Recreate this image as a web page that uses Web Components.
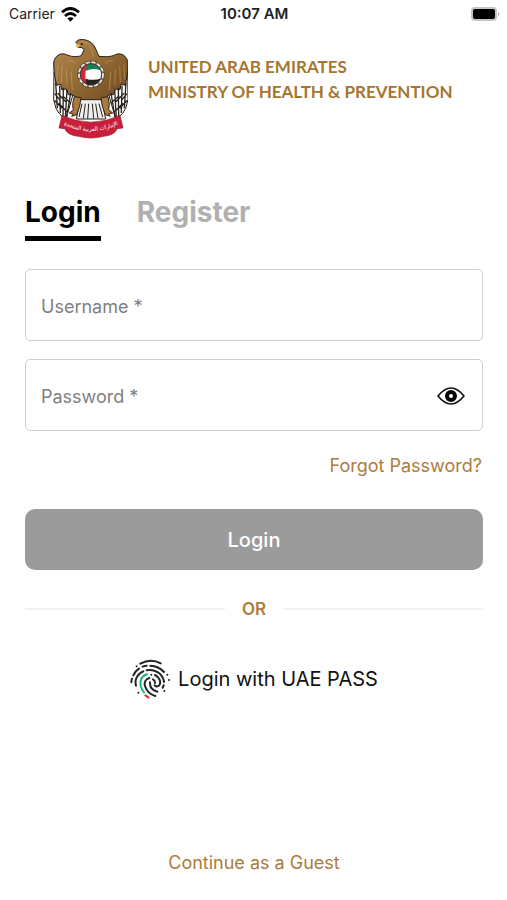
<!DOCTYPE html>
<html lang="en">
<head>
<meta charset="utf-8">
<meta name="viewport" content="width=device-width, initial-scale=1">
<title>Login</title>
<style>
  body { margin: 0; background: #fff; color: #000; font-family: Inter, "Liberation Sans", sans-serif; --gold: #ac7c3c; }
</style>
</head>
<body>
<login-page></login-page>
<script>
const define = (name, html, setup) => {
  const template = document.createElement('template');
  template.innerHTML = html;
  customElements.define(name, class extends HTMLElement {
    constructor() {
      super();
      this.attachShadow({ mode: 'open' }).append(template.content.cloneNode(true));
    }
    connectedCallback() { if (setup) setup(this, this.shadowRoot); }
  });
};

define('status-bar', `
<style>
  :host { display: grid; grid-template-columns: 1fr auto 1fr; align-items: center; height: 28px; padding: 0 7px 0 9px; font-size: 14px; line-height: 20px; color: #222; }
  .left { display: flex; align-items: center; gap: 6px; }
  .time { font-size: 15px; font-weight: 600; }
  .battery { justify-self: end; }
  svg { display: block; }
</style>
<div class="left"><span>Carrier</span>
  <svg width="19" height="15" viewBox="0 0 57 45" fill="none" stroke="#000" stroke-width="8" aria-hidden="true">
    <path d="M3 16Q28 -7 54 16M12 27Q28 12 45 27"/><path d="M19 34Q28 27 38 34L28 44Z" fill="#000" stroke="none"/>
  </svg></div>
<span class="time">10:07 AM</span>
<svg class="battery" width="30" height="16" viewBox="0 0 30 16" aria-hidden="true">
  <rect x="1" y="1" width="26" height="14" rx="4" fill="#c4c4c4"/><rect x="3" y="3" width="22" height="10" rx="2" fill="#000"/><path d="M28 6Q31 8 28 10Z" fill="#aaa"/>
</svg>`);

define('state-emblem', `
<style>:host { display: block; } svg { display: block; }</style>
<svg width="76" height="100" viewBox="20 14 228 300" role="img" aria-label="Emblem of the United Arab Emirates">
  <defs>
    <linearGradient id="brown" x1="0" x2="1" y2="1"><stop offset="0" stop-color="#b58b4f"/><stop offset=".5" stop-color="#926a34"/><stop offset="1" stop-color="#70481f"/></linearGradient>
    <clipPath id="disc"><circle cx="137" cy="120" r="32"/></clipPath>
    <path id="motto" d="M40 263Q137 317 234 263"/>
  </defs>
  <g stroke="#241c18" stroke-width="3" stroke-linejoin="round">
    <path d="M26 112L76 145L86 170L62 253L51 246L41 237L32 222L25 196Z" fill="#fff"/>
    <path d="M247 112L197 145L187 170L211 253L222 246L232 237L241 222L248 196Z" fill="#fff"/>
    <path d="M97 18C110 12 132 17 143 30C153 42 154 54 161 66C178 67 195 69 210 61C228 53 246 66 248 86L247 112L240 153L227 150L224 166L210 164L204 181L190 182L174 200L99 200L83 182L69 181L63 164L49 166L46 150L33 153L26 112L25 86C27 66 45 53 63 61C76 67 93 69 108 64L117 45L109 40L96 38L97 28L91 25Z" fill="url(#brown)"/>
    <path d="M104 196H170L181 254H93Z" fill="#eee"/>
  </g>
  <g fill="none" stroke="#29231f" stroke-width="4">
    <path d="M31 145L36 222M43 154L45 236M54 160L53 246M65 167L60 250M76 176L64 248M28 178L43 196M27 198L50 222M37 177L61 202M40 207L65 232M51 184L77 207"/>
    <path d="M242 145L237 222M230 154L228 236M219 160L220 246M208 167L213 250M197 176L209 248M245 178L230 196M246 198L223 222M236 177L212 202M233 207L208 232M222 184L196 207"/>
    <path d="M110 208L101 248M120 208L114 252M130 208L127 253M141 208L145 253M151 208L158 252M161 208L172 248" stroke-width="3"/>
  </g>
  <path d="M87 187Q79 211 84 226L72 236L84 239L79 246L94 241L103 216L107 190ZM188 187Q195 211 190 226L202 236L190 239L195 246L180 241L171 216L167 190Z" fill="#a87b3c" stroke="#33231a" stroke-width="3"/>
  <path d="M104 23Q123 20 133 34Q144 50 144 69M69 79Q82 77 91 87M203 79Q190 77 180 87M38 91L34 136M50 96L48 144M63 103L65 153M77 112L81 166M235 91L239 136M223 96L225 144M210 103L208 153M196 112L192 166" fill="none" stroke="#d0ac74" stroke-width="3" opacity=".5"/>
  <circle cx="109" cy="29" r="3" fill="#1d1712"/>
  <path d="M92 26L105 31L98 41L93 38Z" fill="#e3b452"/>
  <circle cx="137" cy="120" r="40" fill="#6f665c" stroke="#40352b" stroke-width="2"/>
  <circle cx="137" cy="120" r="36" fill="none" stroke="#e7e0d4" stroke-width="6" stroke-dasharray="12 5"/>
  <g clip-path="url(#disc)"><path fill="#fff" d="M104 87h66v66h-66z"/><path fill="#168153" d="M104 87h66v22Q145 99 122 109h-18z"/><path fill="#252326" d="M122 133Q146 141 170 131v26h-66z"/><path fill="#db2637" d="M104 87h22Q115 118 124 153h-20z"/></g>
  <circle cx="137" cy="120" r="32" fill="none" stroke="#3c332c" stroke-width="3"/>
  <path d="M50 243Q137 284 224 243L233 281L216 283Q207 303 175 306Q137 316 99 306Q67 303 58 283L41 281Z" fill="#c91f3b" stroke="#921b2c" stroke-width="2"/>
  <text font-family="DejaVu Sans, sans-serif" font-size="17" fill="#fff" text-anchor="middle"><textPath href="#motto" startOffset="50%">الإمارات العربية المتحدة</textPath></text>
</svg>`);

define('brand-header', `
<style>
  :host { display: flex; align-items: flex-start; gap: 20px; padding: 11px 27px 0 52px; color: #a6762f; }
  h1 { margin: 15px 0 0; font: 700 17px/25px Lato, sans-serif; white-space: nowrap; }
  h1 span { display: block; }
</style>
<state-emblem></state-emblem>
<h1><span>UNITED ARAB EMIRATES</span><span>MINISTRY OF HEALTH &amp; PREVENTION</span></h1>`);

define('auth-tabs', `
<style>
  :host { display: flex; gap: 36px; }
  button { border: 0; border-bottom: 5px solid transparent; background: none; padding: 0 0 7px; font: 700 28px/34px Inter, sans-serif; color: #b0b0b0; }
  button[aria-selected=true] { color: #000; border-color: #000; }
</style>
<button role="tab" aria-selected="true">Login</button><button role="tab" aria-selected="false">Register</button>`, (host) => host.setAttribute('role', 'tablist'));

define('text-field', `
<style>
  :host { display: flex; align-items: center; box-sizing: border-box; height: 72px; border: 1px solid #cfcfcf; border-radius: 5px; padding: 2px 15px 0; }
  input { flex: 1; min-width: 0; border: 0; outline: 0; padding: 2px 0 0; background: none; font: 400 18px/24px Inter, sans-serif; color: #000; }
  input::placeholder { color: #808080; opacity: 1; }
</style>
<input><slot></slot>`, (host, root) => {
  const input = root.querySelector('input');
  input.type = host.getAttribute('type') || 'text';
  input.placeholder = host.getAttribute('label');
  input.setAttribute('aria-label', host.getAttribute('label'));
});

define('reveal-button', `
<style>:host { display: block; } button { display: block; border: 0; padding: 0; background: none; } svg { display: block; }</style>
<button type="button" aria-label="Show password"><svg width="32" height="20" viewBox="0 0 32 20" fill="none" stroke="#111">
  <path d="M3 10Q16 -6 29 10Q16 26 3 10Z" stroke-width="1.6" stroke-linejoin="round"/><circle cx="16" cy="10" r="4" stroke="#000" stroke-width="4"/>
</svg></button>`);

define('or-divider', `
<style>
  :host { display: flex; align-items: center; gap: 17px; font-size: 17px; line-height: 24px; font-weight: 600; color: var(--gold); }
  :host::before, :host::after { content: ""; flex: 1; height: 2px; background: #f1f1f1; }
</style><slot></slot>`);

define('uae-pass-button', `
<style>
  :host { display: flex; justify-content: center; }
  button { display: flex; align-items: center; gap: 8px; border: 0; padding: 0; background: none; color: #111; font: 400 20px/24px Inter, sans-serif; }
</style>
<button type="button">
<svg width="40" height="40" viewBox="26 27 120 120" fill="none" stroke="#222" stroke-width="6" stroke-linecap="round" aria-hidden="true">
  <path d="M57 41Q88 24 118 40M36 76Q42 63 53 56M64 50Q70 47 76 47M87 47Q112 48 128 66M30 97Q30 91 32 86M44 107C39 89 48 71 66 64M76 61C98 56 120 69 126 87Q128 92 128 96M127 106Q126 110 124 113M101 75C115 82 119 95 115 104C111 112 103 110 100 106M84 84C72 88 68 98 71 108C76 124 88 134 102 138M86 97C85 112 93 121 108 125M95 88Q101 91 101 99"/>
  <path d="M77 73C61 77 54 92 58 108Q61 120 68 127" stroke="#1eb581"/>
  <path d="M72 136L81 142" stroke="#e52a2d"/>
  <path d="M46 49h0M138 74h0M143 90h0M51 128h0M90 74h0M129 123h0"/>
</svg><span>Login with UAE PASS</span></button>`);

define('login-page', `
<style>
  :host { display: flex; flex-direction: column; min-height: 100vh; }
  main { flex: 1; display: flex; flex-direction: column; padding: 56px 24px 25px 25px; }
  form { display: flex; flex-direction: column; gap: 18px; margin-top: 28px; }
  a { color: var(--gold); text-decoration: none; font-size: 18px; line-height: 24px; }
  .forgot { align-self: flex-end; margin-top: 5px; padding-right: 1px; }
  .submit { height: 61px; margin-top: 13px; border: 0; border-radius: 10px; background: #9b9b9b; color: #fff; font: 500 20px/24px Inter, sans-serif; }
  or-divider { margin-top: 27px; }
  uae-pass-button { margin-top: 38px; }
  .guest { margin: auto auto 0; }
</style>
<status-bar></status-bar>
<brand-header></brand-header>
<main>
  <auth-tabs></auth-tabs>
  <form>
    <text-field label="Username *"></text-field>
    <text-field label="Password *" type="password"><reveal-button></reveal-button></text-field>
    <a class="forgot" href="#forgot">Forgot Password?</a>
    <button class="submit" type="button">Login</button>
  </form>
  <or-divider>OR</or-divider>
  <uae-pass-button></uae-pass-button>
  <a class="guest" href="#guest">Continue as a Guest</a>
</main>`);
</script>
</body>
</html>
